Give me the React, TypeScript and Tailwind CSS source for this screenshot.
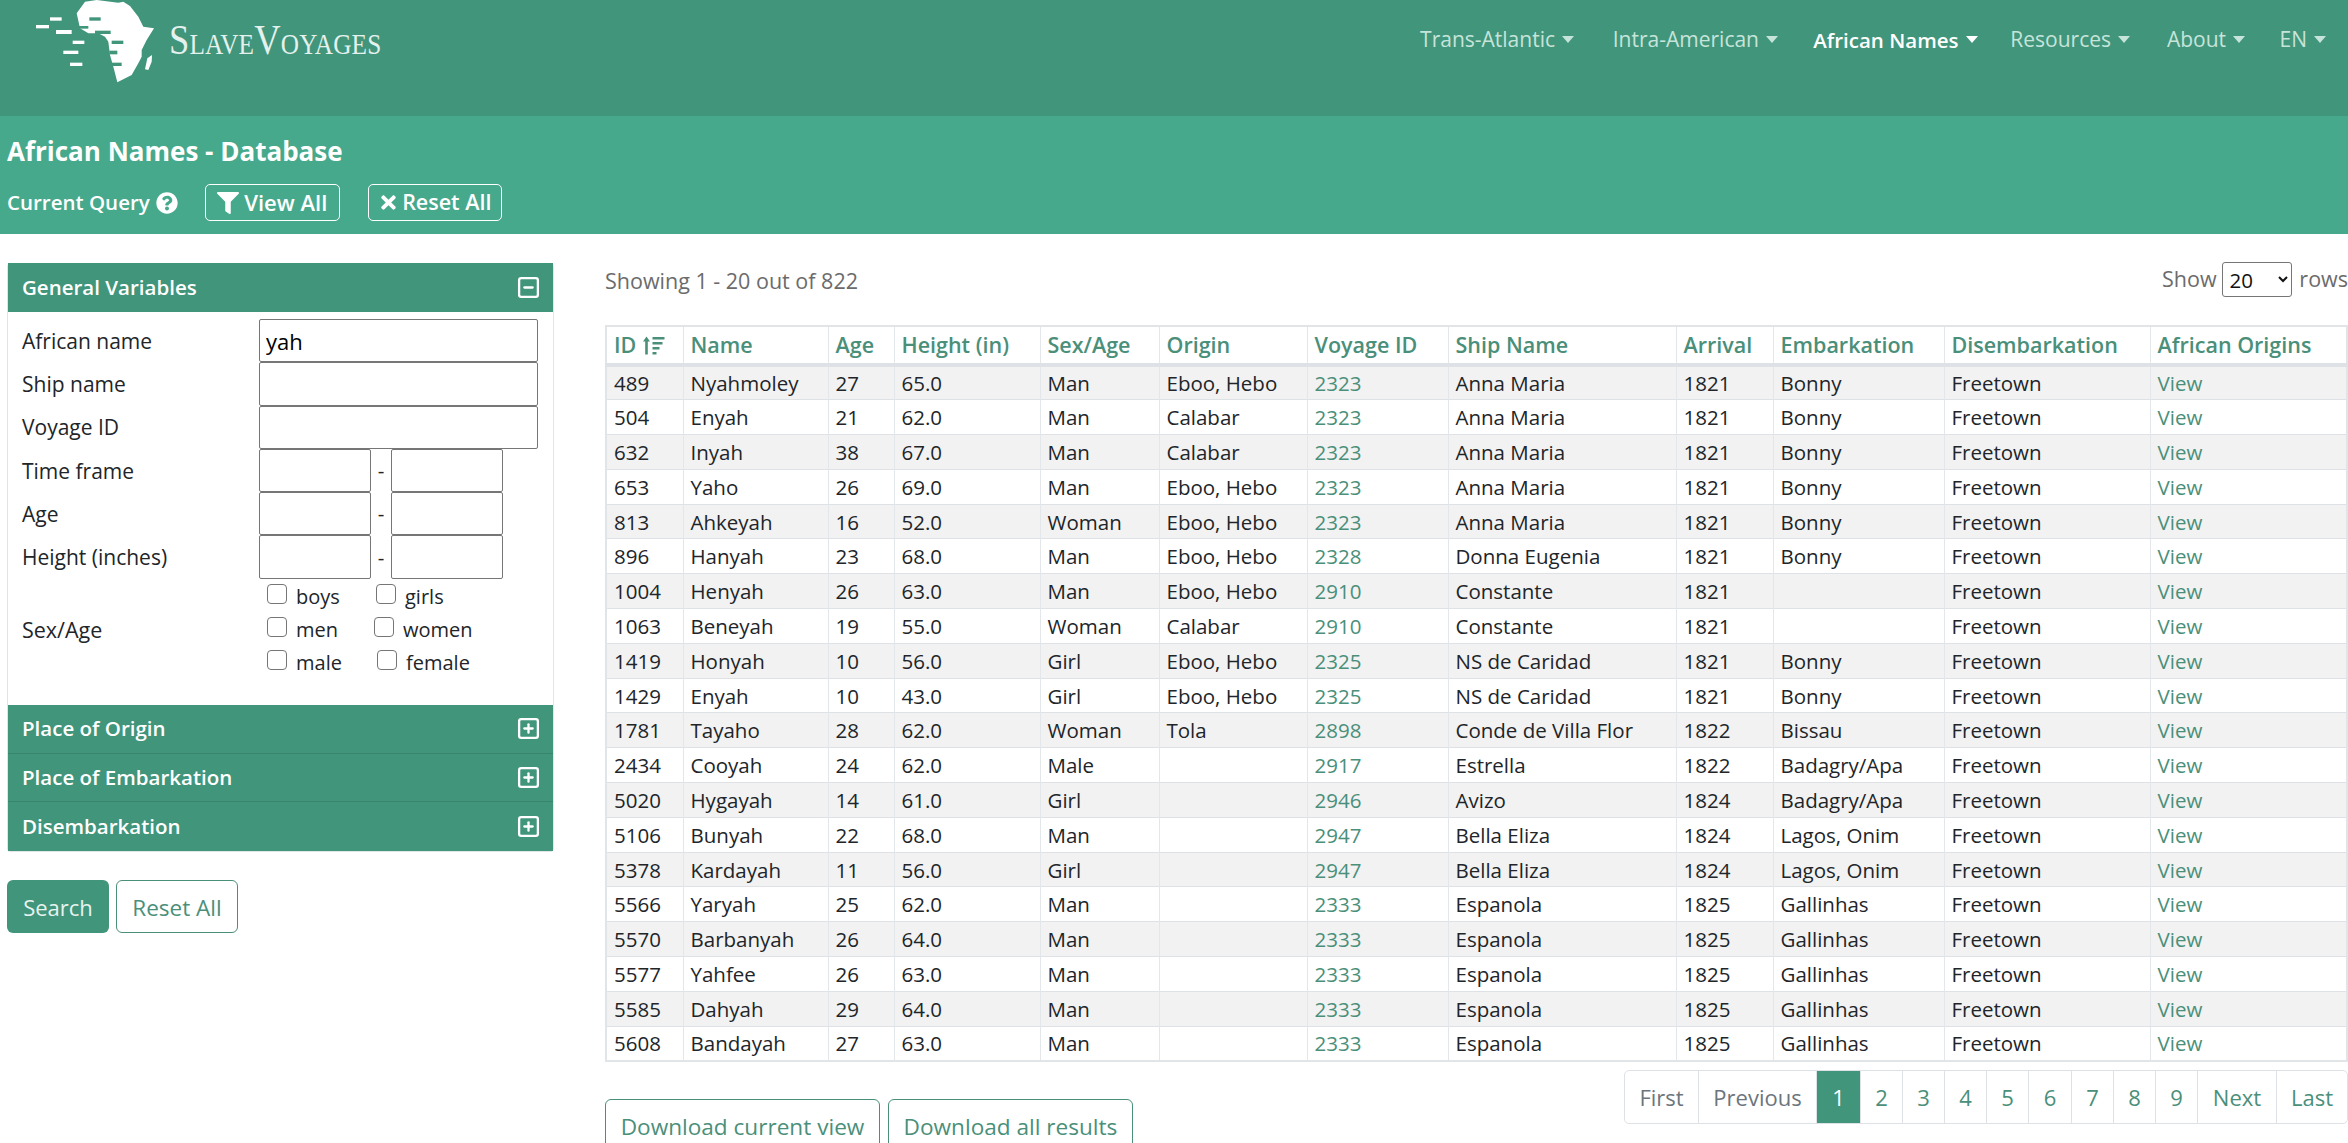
import { SquareMinus, SquarePlus } from 'lucide-react'
import { FaFilter, FaQuestionCircle, FaTimes } from 'react-icons/fa'

const navItems = [
  { label: 'Trans-Atlantic', className: 'w-[192px]' },
  { label: 'Intra-American', className: 'w-[204px]' },
  { label: 'African Names', className: 'w-[199.5px] text-[20.5px]', active: true },
  { label: 'Resources', className: 'w-[152.5px]' },
  { label: 'About', className: 'w-[115px]' },
  { label: 'EN', className: 'w-[81px]' },
]

const columns = [
  { label: 'ID', className: 'w-[77px]' },
  { label: 'Name', className: 'w-[145px]' },
  { label: 'Age', className: 'w-[66px]' },
  { label: 'Height (in)', className: 'w-[146px]' },
  { label: 'Sex/Age', className: 'w-[119px]' },
  { label: 'Origin', className: 'w-[148px]' },
  { label: 'Voyage ID', className: 'w-[141px]' },
  { label: 'Ship Name', className: 'w-[228px]' },
  { label: 'Arrival', className: 'w-[97px]' },
  { label: 'Embarkation', className: 'w-[171px]' },
  { label: 'Disembarkation', className: 'w-[206px]' },
  { label: 'African Origins', className: 'w-[197px]' },
]

const rows = [
  ['489', 'Nyahmoley', '27', '65.0', 'Man', 'Eboo, Hebo', '2323', 'Anna Maria', '1821', 'Bonny'],
  ['504', 'Enyah', '21', '62.0', 'Man', 'Calabar', '2323', 'Anna Maria', '1821', 'Bonny'],
  ['632', 'Inyah', '38', '67.0', 'Man', 'Calabar', '2323', 'Anna Maria', '1821', 'Bonny'],
  ['653', 'Yaho', '26', '69.0', 'Man', 'Eboo, Hebo', '2323', 'Anna Maria', '1821', 'Bonny'],
  ['813', 'Ahkeyah', '16', '52.0', 'Woman', 'Eboo, Hebo', '2323', 'Anna Maria', '1821', 'Bonny'],
  ['896', 'Hanyah', '23', '68.0', 'Man', 'Eboo, Hebo', '2328', 'Donna Eugenia', '1821', 'Bonny'],
  ['1004', 'Henyah', '26', '63.0', 'Man', 'Eboo, Hebo', '2910', 'Constante', '1821', ''],
  ['1063', 'Beneyah', '19', '55.0', 'Woman', 'Calabar', '2910', 'Constante', '1821', ''],
  ['1419', 'Honyah', '10', '56.0', 'Girl', 'Eboo, Hebo', '2325', 'NS de Caridad', '1821', 'Bonny'],
  ['1429', 'Enyah', '10', '43.0', 'Girl', 'Eboo, Hebo', '2325', 'NS de Caridad', '1821', 'Bonny'],
  ['1781', 'Tayaho', '28', '62.0', 'Woman', 'Tola', '2898', 'Conde de Villa Flor', '1822', 'Bissau'],
  ['2434', 'Cooyah', '24', '62.0', 'Male', '', '2917', 'Estrella', '1822', 'Badagry/Apa'],
  ['5020', 'Hygayah', '14', '61.0', 'Girl', '', '2946', 'Avizo', '1824', 'Badagry/Apa'],
  ['5106', 'Bunyah', '22', '68.0', 'Man', '', '2947', 'Bella Eliza', '1824', 'Lagos, Onim'],
  ['5378', 'Kardayah', '11', '56.0', 'Girl', '', '2947', 'Bella Eliza', '1824', 'Lagos, Onim'],
  ['5566', 'Yaryah', '25', '62.0', 'Man', '', '2333', 'Espanola', '1825', 'Gallinhas'],
  ['5570', 'Barbanyah', '26', '64.0', 'Man', '', '2333', 'Espanola', '1825', 'Gallinhas'],
  ['5577', 'Yahfee', '26', '63.0', 'Man', '', '2333', 'Espanola', '1825', 'Gallinhas'],
  ['5585', 'Dahyah', '29', '64.0', 'Man', '', '2333', 'Espanola', '1825', 'Gallinhas'],
  ['5608', 'Bandayah', '27', '63.0', 'Man', '', '2333', 'Espanola', '1825', 'Gallinhas'],
]

const pages = [
  { label: 'First', className: 'w-[74px] text-[#6c757d]' },
  { label: 'Previous', className: 'w-[118px] text-[#6c757d]' },
  { label: '1', className: 'w-[44px] bg-[#41957b] text-white' },
  { label: '2', className: 'w-[42px] text-[#4a8f7a]' },
  { label: '3', className: 'w-[42px] text-[#4a8f7a]' },
  { label: '4', className: 'w-[42px] text-[#4a8f7a]' },
  { label: '5', className: 'w-[42px] text-[#4a8f7a]' },
  { label: '6', className: 'w-[43px] text-[#4a8f7a]' },
  { label: '7', className: 'w-[42px] text-[#4a8f7a]' },
  { label: '8', className: 'w-[42px] text-[#4a8f7a]' },
  { label: '9', className: 'w-[42px] text-[#4a8f7a]' },
  { label: 'Next', className: 'w-[79px] text-[#4a8f7a]' },
  { label: 'Last', className: 'w-[70px] text-[#4a8f7a]' },
]

const Logo = () => (
  <svg width="130" height="90" viewBox="0 0 390 270" className="shrink-0">
    <path
      fill="#fff"
      d="M165 5 L200 0 L265 8 L280 5 L300 18 L325 50 L340 80 L372 85 L350 120 L335 150 L335 170 L325 190 L305 225 L262 247 L250 200 L240 165 L235 125 L225 110 L205 100 L175 100 L150 85 L140 40 Z"
    />
    <path fill="#fff" d="M345 208 L352 175 L366 165 L365 185 L355 210 Z" />
    <g fill="#fff">
      <rect x="60" y="52" width="35" height="10" />
      <rect x="18" y="75" width="39" height="10" />
      <rect x="78" y="90" width="47" height="12" />
      <rect x="128" y="122" width="35" height="10" />
      <rect x="100" y="152" width="45" height="10" />
      <rect x="120" y="188" width="37" height="10" />
    </g>
    <g fill="#41957b">
      <rect x="178" y="52" width="34" height="10" />
      <rect x="140" y="78" width="35" height="8" />
      <rect x="195" y="92" width="47" height="10" />
      <rect x="245" y="122" width="35" height="10" />
      <rect x="238" y="152" width="24" height="11" />
      <rect x="240" y="188" width="35" height="10" />
    </g>
  </svg>
)

const SortIcon = () => (
  <svg width="22" height="19" viewBox="0 0 22 19" className="ml-[7px] inline-block align-[-2px]" fill="#4a8f7a">
    <path d="M3.5 0.5 L7 5.5 L4.8 5.5 L4.8 18.5 L2.2 18.5 L2.2 5.5 L0 5.5 Z" />
    <rect x="9.5" y="1" width="12" height="2.5" />
    <rect x="9.5" y="6" width="10" height="2.5" />
    <rect x="9.5" y="11" width="7" height="2.5" />
    <rect x="9.5" y="16" width="4" height="2.5" />
  </svg>
)

const Field = ({ label, value }: { label: string; value?: string }) => (
  <div className="flex h-[43.3px] items-center">
    <span className="w-[251px] pl-[14px] pt-[2px] text-[21px]">{label}</span>
    <input
      readOnly
      value={value ?? ''}
      className="h-[43.3px] w-[279px] rounded-[2px] border border-[#767676] bg-white px-[6px] text-[22px] text-black"
    />
  </div>
)

const RangeField = ({ label }: { label: string }) => (
  <div className="flex h-[43.3px] items-center">
    <span className="w-[251px] pl-[14px] pt-[2px] text-[21px]">{label}</span>
    <input readOnly className="h-[43.3px] w-[112px] rounded-[2px] border border-[#767676] bg-white" />
    <span className="w-[20px] text-center">-</span>
    <input readOnly className="h-[43.3px] w-[112px] rounded-[2px] border border-[#767676] bg-white" />
  </div>
)

const Check = ({ label, className }: { label: string; className: string }) => (
  <label className={`flex items-center text-[20px] ${className}`}>
    <input type="checkbox" className="h-[20px] w-[20px] -translate-y-[3px] appearance-none rounded-[4px] border border-[#767676] bg-white" />
    <span className="ml-[9px]">{label}</span>
  </label>
)

const CollapsedPanel = ({ label }: { label: string }) => (
  <div className="flex h-[48.5px] items-center justify-between border-b border-[#38846d] bg-[#41957b] pl-[14px] pr-[12px] font-semibold text-white last:border-b-0">
    <span>{label}</span>
    <SquarePlus size={25} strokeWidth={2.2} />
  </div>
)

export default function App() {
  return (
    <div className="h-[1143px] w-[2348px] overflow-hidden bg-white font-['Open_Sans','Noto_Sans',sans-serif] text-[20.5px] text-[#212529]">
      <header className="flex h-[116px] bg-[#41957b]">
        <div className="flex h-[90px] items-start pl-[30px]">
          <Logo />
          <span className="ml-[9px] mt-[12px] origin-left scale-x-[0.87] font-['Liberation_Serif',serif] text-[42px] leading-[56px] tracking-[0.2px] text-[#e4f1ed] [font-variant:small-caps]">
            SlaveVoyages
          </span>
        </div>
        <nav className="ml-auto flex h-[80px] items-center pr-[22px] text-[21px]">
          {navItems.map((item) => (
            <a key={item.label} className={`flex items-center ${item.className} justify-end ${item.active ? 'font-semibold text-white' : 'text-[#c6e4da]'}`}>
              {item.label}
              <span className="ml-[7px] h-0 w-0 -translate-y-[1px] border-x-[6px] border-t-[7px] border-x-transparent border-t-current" />
            </a>
          ))}
        </nav>
      </header>

      <section className="h-[118px] bg-[#46a98c] px-[7px] pt-[17px] text-white">
        <h1 className="text-[26px] font-bold leading-[36px]">African Names - Database</h1>
        <div className="mt-[15px] flex items-center">
          <span className="font-semibold">Current Query</span>
          <FaQuestionCircle size={22} className="ml-[6px]" />
          <button className="ml-[27px] flex h-[37px] w-[135px] items-center justify-center rounded-[5px] border border-white text-[22px] font-semibold text-white">
            <FaFilter size={22} className="mr-[5px]" />
            View All
          </button>
          <button className="ml-[28px] flex h-[37px] w-[134px] items-center justify-center rounded-[5px] border border-white text-[21.5px] font-semibold text-white">
            <FaTimes size={21} className="mr-[3px]" />
            Reset All
          </button>
        </div>
      </section>

      <main className="flex">
        <aside className="w-[605px] shrink-0 pl-[7px] pt-[29px]">
          <div className="w-[547px] rounded-[4px] border border-[#e2e5e7] border-t-0">
            <div className="flex h-[49px] items-center justify-between bg-[#41957b] pl-[14px] pr-[12px] font-semibold text-white">
              <span>General Variables</span>
              <SquareMinus size={25} strokeWidth={2.2} />
            </div>
            <div className="h-[393px] pt-[7px]">
              <Field label="African name" value="yah" />
              <Field label="Ship name" />
              <Field label="Voyage ID" />
              <RangeField label="Time frame" />
              <RangeField label="Age" />
              <RangeField label="Height (inches)" />
              <div className="mt-[2px] flex items-center">
                <span className="w-[259px] pl-[14px] text-[21.5px]">Sex/Age</span>
                <div className="flex flex-col">
                  <div className="flex h-[33px]">
                    <Check label="boys" className="w-[109px]" />
                    <Check label="girls" className="" />
                  </div>
                  <div className="flex h-[33px]">
                    <Check label="men" className="w-[107px]" />
                    <Check label="women" className="" />
                  </div>
                  <div className="flex h-[33px]">
                    <Check label="male" className="w-[110px]" />
                    <Check label="female" className="" />
                  </div>
                </div>
              </div>
            </div>
            <CollapsedPanel label="Place of Origin" />
            <CollapsedPanel label="Place of Embarkation" />
            <CollapsedPanel label="Disembarkation" />
          </div>
          <div className="mt-[28px] flex gap-[7px] text-[22px]">
            <button className="h-[53px] w-[102px] rounded-[6px] bg-[#41957b] pt-[3px] text-[#e6f3ef]">Search</button>
            <button className="h-[53px] w-[122px] rounded-[6px] border border-[#4a8f7a] pt-[3px] text-[22.5px] text-[#4a8f7a]">Reset All</button>
          </div>
        </aside>

        <div className="w-[1743px] shrink-0">
          <div className="flex h-[91px] items-start justify-between text-[21.5px] text-[#6b6b6b]">
            <span className="mt-[31px]">Showing 1 - 20 out of 822</span>
            <div className="mt-[28px] flex w-[186px] shrink-0 items-center whitespace-nowrap">
              <span>Show</span>
              <select className="ml-[5px] h-[35px] w-[75px] rounded-[3px] border border-[#767676] bg-white pl-[3px] text-[20.5px] text-[#111]">
                <option>20</option>
              </select>
              <span className="ml-[7px]">rows</span>
            </div>
          </div>

          <table className="w-[1741px] table-fixed border-collapse border-2 border-[#e2e5e7]">
            <colgroup>
              {columns.map((col) => (
                <col key={col.label} className={col.className} />
              ))}
            </colgroup>
            <thead>
              <tr className="h-[39px] border-b-[4px] border-[#dee2e6] text-[21.5px]">
                {columns.map((col) => (
                  <th key={col.label} className="border-x border-[#e4e7ea] px-[7px] text-left font-semibold text-[#4a8f7a]">
                    {col.label}
                    {col.label === 'ID' && <SortIcon />}
                  </th>
                ))}
              </tr>
            </thead>
            <tbody>
              {rows.map((row, i) => (
                <tr key={row[0]} className={`h-[34.8px] border-b border-[#dee2e6] leading-[24px] ${i % 2 === 0 ? 'bg-[#f2f2f2]' : 'bg-white'}`}>
                  {row.map((cell, j) => (
                    <td key={j} className={`whitespace-nowrap border-x border-[#e4e7ea] px-[7px] ${j === 6 ? 'text-[#4a8f7a]' : ''}`}>
                      {cell}
                    </td>
                  ))}
                  <td className="whitespace-nowrap border-x border-[#e4e7ea] px-[7px]">Freetown</td>
                  <td className="whitespace-nowrap border-x border-[#e4e7ea] px-[7px] text-[#4a8f7a]">View</td>
                </tr>
              ))}
            </tbody>
          </table>

          <div className="mt-[8px] flex h-[54px] justify-end text-[22px]">
            <div className="flex overflow-hidden rounded-[5px] border border-[#dee2e6]">
              {pages.map((page) => (
                <a key={page.label} className={`flex items-center justify-center border-r border-[#dee2e6] pt-[2px] last:border-r-0 ${page.className}`}>
                  {page.label}
                </a>
              ))}
            </div>
          </div>

          <div className="-mt-[25px] flex gap-[8px] text-[22.6px]">
            <button className="h-[53px] w-[275px] rounded-[6px] border border-[#4a8f7a] pt-[3px] text-[#4a8f7a]">Download current view</button>
            <button className="h-[53px] w-[245px] rounded-[6px] border border-[#4a8f7a] pt-[3px] text-[#4a8f7a]">Download all results</button>
          </div>
        </div>
      </main>
    </div>
  )
}
